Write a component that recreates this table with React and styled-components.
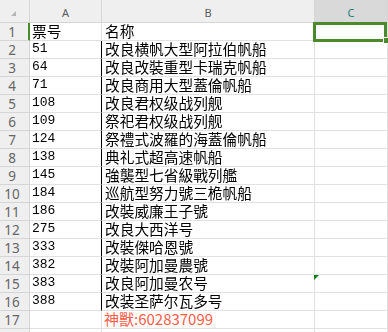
import React from "react";
import styled, { createGlobalStyle } from "styled-components";

const Global = createGlobalStyle`
  html, body { margin: 0; padding: 0; background: #ffffff; overflow: hidden; }
  #root { width: 388px; height: 332px; overflow: hidden; }
`;

const GRID = "#e1e1e1";
const HEAD_LINE = "#d5d5d5";
const GREEN = "#4a8a2c";

const Sheet = styled.div`
  display: grid;
  grid-template-columns: 30px 72px 213px 73px 1fr;
  grid-template-rows: 23px repeat(18, 18px);
  width: 388px;
`;

const Corner = styled.div`
  position: relative;
  background: #efefef;
  border-right: 1px solid ${HEAD_LINE};
  border-bottom: 1px solid ${HEAD_LINE};
  &::after {
    content: "";
    position: absolute;
    left: 11px;
    top: 11px;
    width: 0;
    height: 0;
    border-bottom: 5px solid #b4b4b4;
    border-left: 5px solid transparent;
  }
`;

const ColHeader = styled.div`
  background: ${(p) => (p.$active ? "#d9d9d9" : "#efefef")};
  color: ${(p) => (p.$active ? "#1b7f76" : "#5a5a5a")};
  border-right: 1px solid ${HEAD_LINE};
  border-bottom: 1px solid ${HEAD_LINE};
  font-family: "Noto Sans", "Open Sans", sans-serif;
  font-size: 11px;
  display: flex;
  align-items: center;
  justify-content: center;
  padding-top: 2px;
  box-sizing: border-box;
`;

const RowHeader = styled.div`
  background: #efefef;
  color: #666666;
  border-right: 1px solid ${(p) => (p.$active ? GREEN : HEAD_LINE)};
  box-shadow: ${(p) => (p.$active ? `inset -1px 0 0 ${GREEN}` : "none")};
  border-bottom: 1px solid ${HEAD_LINE};
  font-family: "Noto Sans", "Open Sans", sans-serif;
  font-size: 13.5px;
  display: flex;
  align-items: center;
  justify-content: center;
  padding-right: 5px;
  box-sizing: border-box;
`;

const Cell = styled.div`
  position: relative;
  border-right: 1px solid ${(p) => (p.$strong ? "#000000" : GRID)};
  border-bottom: 1px solid ${GRID};
  display: flex;
  align-items: flex-end;
  padding-left: ${(p) => (p.$pad ?? 2)}px;
  padding-bottom: 1px;
  box-sizing: border-box;
  white-space: nowrap;
  overflow: visible;
  color: #000000;
  font-family: ${(p) =>
    p.$num
      ? `"Liberation Mono", "DejaVu Sans Mono", monospace`
      : `"Noto Sans CJK SC", "Noto Sans", sans-serif`};
  font-size: ${(p) => (p.$num ? "13px" : "14.7px")};
  line-height: 16px;
  z-index: ${(p) => (p.$top ? 2 : 1)};
`;

const Ink = styled.span`
  filter: grayscale(1);
`;

const Watermark = styled.span`
  color: #ff5d4a;
  font-family: "Noto Sans CJK SC", "Noto Sans", sans-serif;
  font-size: 15px;
  margin-left: -1px;
`;

const Selection = styled.div`
  position: absolute;
  left: -2px;
  top: -1px;
  width: 74px;
  height: 20px;
  box-sizing: border-box;
  border: 3px solid ${GREEN};
  pointer-events: none;
`;

const FillHandle = styled.div`
  position: absolute;
  left: 68px;
  top: 14px;
  width: 5px;
  height: 5px;
  background: ${GREEN};
  border: 1px solid #ffffff;
`;

const ErrorMark = styled.div`
  position: absolute;
  left: -1px;
  top: 0px;
  width: 0;
  height: 0;
  border-top: 5px solid #0e7d12;
  border-right: 5px solid transparent;
`;

const data = [
  ["票号", "名称"],
  ["51", "改良横帆大型阿拉伯帆船"],
  ["64", "改良改裝重型卡瑞克帆船"],
  ["71", "改良商用大型蓋倫帆船"],
  ["108", "改良君权级战列舰"],
  ["109", "祭祀君权级战列舰"],
  ["124", "祭禮式波羅的海蓋倫帆船"],
  ["138", "典礼式超高速帆船"],
  ["145", "強襲型七省級戰列艦"],
  ["184", "巡航型努力號三桅帆船"],
  ["186", "改裝威廉王子號"],
  ["275", "改良大西洋号"],
  ["333", "改裝傑哈恩號"],
  ["382", "改裝阿加曼農號"],
  ["383", "改良阿加曼农号"],
  ["388", "改装圣萨尔瓦多号"],
];

export default function App() {
  const rows = [];
  for (let i = 1; i <= 18; i++) {
    const d = data[i - 1];
    const strong = i >= 2 && i <= 16;
    rows.push(
      <React.Fragment key={i}>
        <RowHeader $active={i === 1}>{i <= 17 ? i : ""}</RowHeader>
        <Cell $strong={strong} $num={i > 1} $pad={2}>
          {d ? <Ink>{d[0]}</Ink> : ""}
        </Cell>
        <Cell $pad={3}>
          {d ? (
            <Ink>{d[1]}</Ink>
          ) : i === 17 ? (
            <Watermark>神獸:602837099</Watermark>
          ) : (
            ""
          )}
        </Cell>
        <Cell $top={i === 1}>
          {i === 1 && (
            <>
              <Selection />
              <FillHandle />
            </>
          )}
          {i === 15 && <ErrorMark />}
        </Cell>
        <Cell />
      </React.Fragment>
    );
  }
  return (
    <>
      <Global />
      <Sheet>
        <Corner />
        <ColHeader>A</ColHeader>
        <ColHeader>B</ColHeader>
        <ColHeader $active>C</ColHeader>
        <ColHeader />
        {rows}
      </Sheet>
    </>
  );
}
